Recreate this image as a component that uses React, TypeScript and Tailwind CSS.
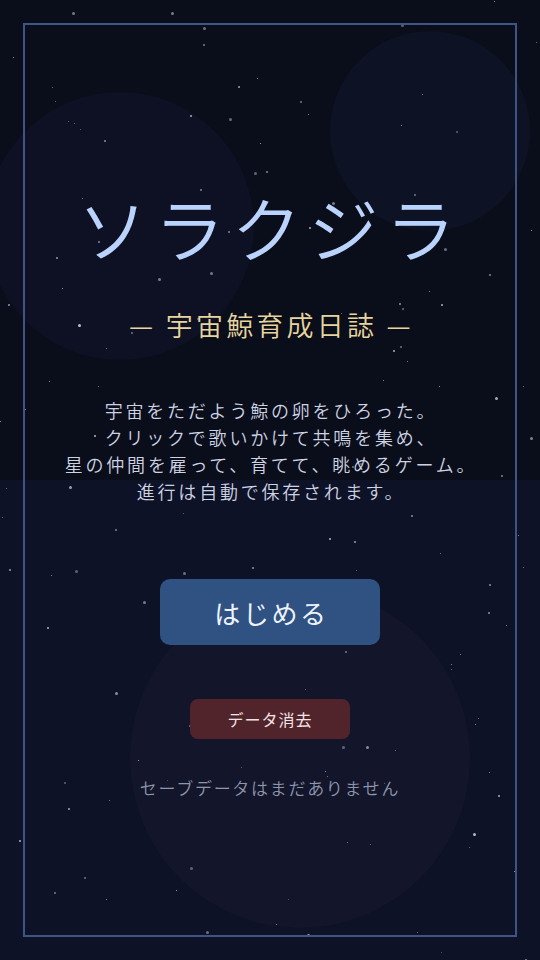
import { useMemo } from "react";

interface Star {
  x: number;
  y: number;
  size: number;
  opacity: number;
}

function makeStars(count: number, seed: number): Star[] {
  let s = seed;
  const rand = () => {
    s = (s * 1664525 + 1013904223) % 4294967296;
    return s / 4294967296;
  };
  const stars: Star[] = [];
  for (let i = 0; i < count; i++) {
    const r = rand();
    stars.push({
      x: rand() * 540,
      y: rand() * 960,
      size: r < 0.5 ? 1 : r < 0.85 ? 2 : 3,
      opacity: 0.4 + rand() * 0.5
    });
  }
  return stars;
}

function StarField() {
  const stars = useMemo(() => makeStars(140, 20240611), []);
  return (
    <div className="pointer-events-none absolute inset-0">
      {stars.map((star, i) => (
        <span
          key={i}
          className="absolute rounded-full bg-[#cdd5ec]"
          style={{ left: star.x, top: star.y, width: star.size, height: star.size, opacity: star.opacity }}
        />
      ))}
    </div>
  );
}

export default function App() {
  return (
    <div className="relative min-h-[960px] w-full overflow-hidden bg-[linear-gradient(to_bottom,#0a0d1a_480px,#0d1227_480px)] font-['Noto_Sans_CJK_JP','Noto_Sans',sans-serif]">
      {/* 背景の惑星 */}
      <div className="pointer-events-none absolute left-[-14px] top-[92px] h-[268px] w-[268px] rounded-full bg-[#0e1124]" />
      <div className="pointer-events-none absolute left-[330px] top-[31px] h-[200px] w-[200px] rounded-full bg-[#0d1224]" />
      <div className="pointer-events-none absolute left-[130px] top-[588px] h-[340px] w-[340px] rounded-full bg-[#13152b]" />
      <StarField />

      <main className="relative m-[23px] flex h-[914px] flex-col items-center border-2 border-[#3e5484] pt-[166px] text-center">
        <h1 className="text-[70px] font-[350] leading-[72px] tracking-[0.1em] text-[#bad3fc]">
          ソラクジラ
        </h1>
        <p className="mt-[46px] pl-[3px] text-[27px] font-[350] leading-[32px] tracking-[0.12em] text-[#e6d59e]">
          — 宇宙鯨育成日誌 —
        </p>
        <p className="mt-[56px] pl-[2px] text-[18px] font-[350] leading-[27px] tracking-[0.155em] text-[#cdd3e2]">
          宇宙をただよう鯨の卵をひろった。
          <br />
          クリックで歌いかけて共鳴を集め、
          <br />
          星の仲間を雇って、育てて、眺めるゲーム。
          <br />
          進行は自動で保存されます。
        </p>
        <button
          type="button"
          className="mt-[74px] flex h-[66px] w-[220px] items-center justify-center rounded-[10px] bg-[#2f5283] pl-[3px] text-[26px] tracking-[0.1em] text-[#eef2fb]"
        >
          はじめる
        </button>
        <button
          type="button"
          className="mt-[54px] flex h-[40px] w-[160px] items-center justify-center rounded-[8px] bg-[#51242b] text-[16px] tracking-[0.06em] text-[#f2e4e6]"
        >
          データ消去
        </button>
        <p className="mt-[37px] text-[17px] font-[350] leading-[24px] tracking-[0.1em] text-[#8d96ac]">セーブデータはまだありません</p>
      </main>
    </div>
  );
}
